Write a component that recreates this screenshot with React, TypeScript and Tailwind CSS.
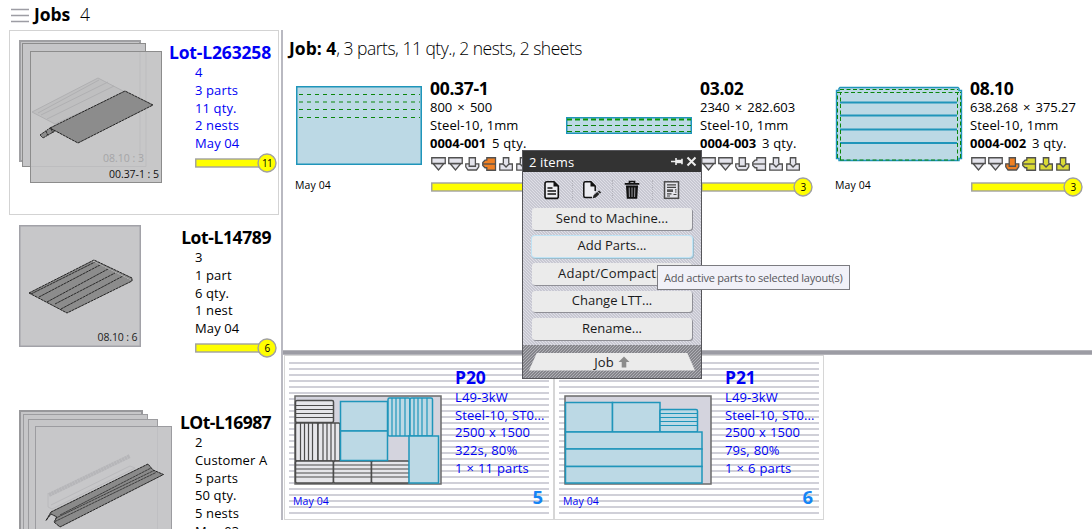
import type { ReactNode } from "react";

const FONT = "font-['Open_Sans','Noto_Sans',sans-serif]";

function Progress({ value, width }: { value: number; width: number }) {
  return (
    <svg width={width + 10} height="20" viewBox={`0 0 ${width + 10} 20`} className="block shrink-0">
      <rect x="0.75" y="6" width={width - 4} height="8" fill="#ffff00" stroke="#a0a0a0" strokeWidth="1.4" />
      <circle cx={width} cy="10" r="9" fill="#ffff00" stroke="#a0a0a0" strokeWidth="1.4" />
      <text x={width} y="13.8" textAnchor="middle" fontSize="10" fontWeight="500" fill="#000" letterSpacing="-0.6">
        {value}
      </text>
    </svg>
  );
}

type LotProps = {
  title: string;
  titleTracking: string;
  rows: string[];
  value?: number;
  selected?: boolean;
  children: ReactNode;
};

function Lot({ title, titleTracking, rows, value, selected, children }: LotProps) {
  return (
    <div
      className={`flex h-[185px] shrink-0 ${selected ? "text-[#0000f5] shadow-[inset_0_0_0_1px_#d3d3d3]" : "text-black"}`}
    >
      <svg width="166" height="185" viewBox="0 0 166 185" className="-mr-3 block shrink-0">
        {children}
      </svg>
      <div className="flex flex-1 flex-col pt-[10px]">
        <div className={`h-[24px] pr-2 text-right text-[17.5px] leading-[24px] font-bold whitespace-nowrap ${titleTracking}`}>
          {title}
        </div>
        <div className="pl-8 text-[13px] leading-[17.75px] tracking-[0.12px] whitespace-nowrap">
          {rows.map((r) => (
            <div key={r}>{r}</div>
          ))}
        </div>
        {value !== undefined && (
          <div className="pl-8">
            <Progress value={value} width={72} />
          </div>
        )}
      </div>
    </div>
  );
}

type Tool = "die" | "cup" | "left" | "vee";
const TOOL_PATHS: Record<Tool, string[]> = {
  die: ["M2 6.5 7.5 13 13 6.5z", "M.75.75h13.5V6.5H.75z"],
  cup: ["M4.2 6.8H.75V9.8L3 13h8.5l2.3-3.2V6.8h-3.4z", "M4.2.75h6.2v8.5H4.2z"],
  left: ["M4.8.75h8.7v12.5H4.8v-2.5H3L.75 8.5V5.5L3 3.2h1.8z", "M.75 7h12.7"],
  vee: ["M.75 13.2V7h3.6V.75h5.4V7h3.6v6.2z", "M3.6 6.5 7.05 10 10.5 6.5"],
};

function ToolIcon({ kind, fill }: { kind: Tool; fill: string }) {
  return (
    <svg width="17" height="14" viewBox="0 0 17 14" className="block shrink-0">
      {TOOL_PATHS[kind].map((d) => (
        <path key={d} d={d} fill={fill} stroke="#505050" strokeWidth="1.3" />
      ))}
    </svg>
  );
}

const PALE = "#e4e4ec";
const ORANGE = "#f08022";
const LIME = "#dada35";
const KINDS: Tool[] = ["die", "die", "cup", "left", "vee", "vee"];

type PartProps = {
  name: string;
  size: string;
  code: string;
  qty: number;
  fills: string[];
  children: ReactNode;
};

function Part({ name, size, code, qty, fills, children }: PartProps) {
  return (
    <div className="flex w-[270px] shrink-0">
      <div className="flex w-[134px] flex-col">
        <svg width="128" height="98" viewBox="0 0 128 98" className="block">
          {children}
        </svg>
        <div className="mt-[2px] text-[10.5px] leading-[14px] tracking-[0.1px]">May 04</div>
      </div>
      <div className="-mt-px flex flex-col pl-px whitespace-nowrap">
        <div className="h-[22px] text-[17.5px] leading-[23px] font-bold tracking-[-0.3px]">{name}</div>
        <div className="text-[13px] leading-[17.75px]">
          <div className="tracking-[-0.03px] [word-spacing:1.8px]">{size}</div>
          <div className="pt-[0.5px] tracking-[0.12px]">Steel-10, 1mm</div>
          <div className="-mt-[0.5px] flex">
            <span className="w-[62px] font-bold tracking-[0px]">{code}</span>
            <span className="tracking-[0.2px]">{qty} qty.</span>
          </div>
        </div>
        <div className="mt-[5px] flex pl-px">
          {KINDS.map((k, i) => (
            <ToolIcon key={i} kind={k} fill={fills[i]} />
          ))}
        </div>
        <div className="mt-[6px] pl-px">
          <Progress value={qty} width={102} />
        </div>
      </div>
    </div>
  );
}

type NestProps = { name: string; lines: string[]; index: number; children: ReactNode };

function Nest({ name, lines, index, children }: NestProps) {
  return (
    <div className="h-[165px] w-[270px] shrink-0 border border-[#d6d6d6] px-[4px] pt-[6px] text-[#0000f5]">
      <div className="flex h-[152px] bg-[repeating-linear-gradient(to_bottom,#d0d0d8_0px,#d0d0d8_2px,#ffffff_2px,#ffffff_6px)]">
        <div className="flex w-[166px] flex-col">
          <svg width="148" height="90" viewBox="0 0 148 90" className="mt-[33px] ml-[5px] block">
            {children}
          </svg>
          <div className="mt-[9px] ml-[4px] text-[10.5px] leading-[15px] tracking-[0.1px]">May 04</div>
        </div>
        <div className="flex flex-1 flex-col whitespace-nowrap">
          <div className="mt-[3px] h-[24px] text-[17.5px] leading-[24px] font-bold tracking-[-0.1px]">{name}</div>
          <div className="text-[13px] leading-[17.7px] tracking-[0.1px] [word-spacing:0.5px]">
            {lines.map((l) => (
              <div key={l}>{l}</div>
            ))}
          </div>
          <div className="mt-[7px] pr-[6px] text-right text-[18.5px] leading-[24px] font-bold text-[#1585f5]">{index}</div>
        </div>
      </div>
    </div>
  );
}

const TEAL = "#1f95ba";
const BLUE = "#bcd9e5";

type SlabProps = { x: number; y: number; w: number; h: number; v?: number[]; r?: number[]; gray?: boolean };

function Slab({ x, y, w, h, v = [], r = [], gray }: SlabProps) {
  const stroke = gray ? "#4c4c4c" : TEAL;
  return (
    <g stroke={stroke} fill="none">
      <rect x={x} y={y} width={w} height={h} fill={gray ? "#e6e6ea" : BLUE} strokeWidth="1.5" rx={v.length || r.length ? 1.5 : 0} />
      {v.map((p) => (
        <path key={p} d={`M${x + p} ${y}v${h}`} strokeWidth="1.2" />
      ))}
      {r.map((p) => (
        <path key={p} d={`M${x} ${y + p}h${w}`} strokeWidth="1.2" />
      ))}
    </g>
  );
}

function ActionButton({ label, tracking, hot }: { label: string; tracking: string; hot?: boolean }) {
  return (
    <button
      className={`flex h-[21.5px] w-[160px] items-center justify-center rounded-[3px] bg-[#ebebeb] pb-px text-[13px] leading-none text-[#1a1a1a] ${tracking} ${
        hot
          ? "shadow-[0_0_0_1px_#bfe3f5,1px_1px_0_1px_#9cbccb]"
          : "shadow-[1px_1px_0_0_#8f8f96]"
      }`}
    >
      {label}
    </button>
  );
}

function Divider() {
  return <div className="h-5 border-l border-dotted border-[#b4b4bc]" />;
}

function Popup() {
  return (
    <div className="absolute top-[150px] left-[522px] flex h-[229px] w-[180px] flex-col border border-[#55555a] bg-[repeating-linear-gradient(45deg,#c8c8d2_0px,#c8c8d2_1px,#dfdfe7_1px,#dfdfe7_2.12px)]">
      <div className="flex h-[21px] shrink-0 items-center bg-[#333333] pr-[4px] pl-[6px] text-[13px] text-white">
        <span className="flex-1 pt-px leading-5 tracking-[0.15px]">2 items</span>
        <svg width="12" height="9" viewBox="0 0 12 9" className="mr-[3px] block">
          <path d="M0 4.5h5" stroke="#ededed" strokeWidth="1.5" />
          <path d="M5 1v7M11 1.8v5.4" stroke="#ededed" strokeWidth="1.6" />
          <path d="M5 2.8h6v3.4H5z" fill="#ededed" />
        </svg>
        <svg width="11" height="11" viewBox="0 0 11 11" className="block">
          <path d="M1.5 1.5l8 8m0-8-8 8" stroke="#ededed" strokeWidth="2" />
        </svg>
      </div>
      <div className="flex h-[35px] shrink-0 items-center justify-center gap-[4.5px]">
        <svg width="30" height="20" viewBox="0 0 30 20" className="block">
          <path d="M10 1.8h7l4.3 4.3v10.3a2 2 0 0 1-2 2H10a2 2 0 0 1-2-2V3.8a2 2 0 0 1 2-2z" fill="#ececf0" stroke="#111" strokeWidth="1.6" />
          <path d="M16.5 1.8l4.8 4.7h-4.8z" fill="#111" />
          <path d="M10.500 8h5M10.500 11h8.500M10.500 14h8.500" fill="none" stroke="#111" strokeWidth="1.5" />
        </svg>
        <Divider />
        <svg width="30" height="20" viewBox="0 0 30 20" className="block">
          <path d="M15 17.5H8.3a1.5 1.5 0 0 1-1.5-1.5V3.3a1.5 1.5 0 0 1 1.5-1.500H14l4.2 4.2V11" fill="#ececf0" stroke="#111" strokeWidth="1.5" />
          <path d="M13.5 1.5l5 5h-5z" fill="#111" />
          <path d="M15.8 18.3l.8-3 3.6-3.3 2.2 2-3.6 3.5zM20.8 11.5l1.2-1.1 2.2 2-1.2 1.2z" fill="#222" />
        </svg>
        <Divider />
        <svg width="30" height="20" viewBox="0 0 30 20" className="block">
          <path d="M7.7 3.8h14.6M12.5 3V1.5h5V3" fill="none" stroke="#111" strokeWidth="1.7" />
          <path d="M9 5.5h12l-.8 13.3H9.800z" fill="#111" />
          <path d="M12.2 7.5l.2 9.5M15 7.5V17M17.8 7.5l-.2 9.500" stroke="#9a9aa0" strokeWidth="1" />
        </svg>
        <Divider />
        <svg width="30" height="20" viewBox="0 0 30 20" className="block">
          <rect x="7.5" y="1.8" width="14" height="16.5" fill="#e4e4ea" stroke="#4c4c4c" strokeWidth="1.5" />
          <path d="M10 4.800h9M10 7.300h9M10 13.800h4.500M10 16h3M18 9.800h1.500M18 12h1.500M16.500 14.500h3" stroke="#444" strokeWidth="1.2" />
          <path d="M10 9.300h6v2.700h-6z" fill="#555" />
        </svg>
      </div>
      <div className="flex flex-1 flex-col items-center gap-[6px] pt-px">
        <ActionButton label="Send to Machine..." tracking="tracking-[0.05px]" />
        <ActionButton label="Add Parts..." tracking="tracking-[0px]" hot />
        <ActionButton label="Adapt/Compact..." tracking="tracking-[0.25px] pl-px" />
        <ActionButton label="Change LTT..." tracking="tracking-[0px]" />
        <ActionButton label="Rename..." tracking="tracking-[0px]" />
      </div>
      <div className="flex h-[33px] shrink-0 items-center justify-center bg-[repeating-linear-gradient(135deg,#85858b_0px,#85858b_1px,#b0b0b6_1px,#b0b0b6_2.12px)]">
        <div className="flex h-[18px] w-[166px] items-center justify-center gap-1 bg-[#ebebeb] text-[13px] text-[#1a1a1a] [clip-path:polygon(8px_0,158px_0,100%_100%,0_100%)]">
          <span className="leading-[18px]">Job</span>
          <svg width="12" height="12" viewBox="0 0 12 12" className="block">
            <path d="M6 .5 11.5 6H8.3v5.5H3.7V6H.5z" fill="#8c8c8c" />
          </svg>
        </div>
      </div>
    </div>
  );
}

export default function App() {
  return (
    <div className={`relative flex h-[529px] w-[1092px] flex-col overflow-hidden bg-white text-black ${FONT}`}>
      <header className="flex h-[30px] shrink-0 items-center pl-[11px] text-[17.5px] leading-[28px]">
        <svg width="18" height="15" viewBox="0 0 18 15" className="block">
          <path d="M0 1.5h18M0 7.5h18M0 13.5h18" stroke="#9d9da4" strokeWidth="1.6" />
        </svg>
        <span className="ml-[5px] pb-[2px] font-bold tracking-[-0.1px]">Jobs</span>
        <span className="ml-[10px] pb-[2px] font-light">4</span>
      </header>
      <div className="flex min-h-0 flex-1">
        <aside className="flex w-[279px] shrink-0 flex-col overflow-hidden pl-[9px]">
          <Lot title="Lot-L263258" titleTracking="tracking-[-0.17px]" rows={["4", "3 parts", "11 qty.", "2 nests", "May 04"]} value={11} selected>
            <rect x="11" y="11" width="120" height="120" fill="#c6c6c8" stroke="#a0a0a3" strokeWidth="2" />
            <rect x="13.5" y="13.5" width="123" height="123" fill="#c6c6c8" stroke="#8c8c8c" />
            <rect x="21.5" y="21.5" width="131" height="131" fill="#c7c7c8" stroke="#8c8c8c" />
            <path d="M131 22v109M22 136.5h115V22" fill="none" stroke="#bdbdbf" />
            <path d="M23 82 89 48 116 62 46 94z" fill="#bfbfc0" stroke="#b0b0b2" />
            <path d="M29 83 90 50M38 89 105 56M32 85 99 52" fill="none" stroke="#b0b0b2" />
            <path d="M31 105l10-7 5 3-12 7zM37 101l2 5M42 99l2 4" fill="#8c8c8c" stroke="#222" strokeDasharray="2 .7" />
            <path d="M41 98 116 61 144 75 69 113z" fill="#8c8c8c" stroke="#222" strokeDasharray="3 .5" />
            <text x="94" y="132" fontSize="10.5" fill="#a5a5a7" textLength="41">08.10 : 3</text>
            <text x="100" y="148" fontSize="10.5" fill="#111" textLength="50">00.37-1 : 5</text>
          </Lot>
          <Lot title="Lot-L14789" titleTracking="tracking-[-0.4px]" rows={["3", "1 part", "6 qty.", "1 nest", "May 04"]} value={6}>
            <rect x="10.75" y="10.75" width="120.5" height="120.5" fill="#c7c7c9" stroke="#a2a2a8" strokeWidth="1.5" />
            <path d="M20 78 85 45 123 63V66L58 98z" fill="#8c8c8c" stroke="#222" strokeDasharray="3 .5" />
            <path d="M22 79 86 47 122 65M30 82 91 50M38 87 99 54M46 89 106 58M52 94 114 61" fill="none" stroke="#2b2b2b" strokeDasharray="3 .5" />
            <path d="M84 46 122 65" stroke="#ddd" strokeWidth=".8" />
            <text x="88.5" y="126" fontSize="10.5" fill="#222" textLength="40">08.10 : 6</text>
          </Lot>
          <Lot title="LOt-L16987" titleTracking="tracking-[-0.6px]" rows={["2", "Customer A", "5 parts", "50 qty.", "5 nests", "May 03"]}>
            <rect x="11" y="11" width="122" height="140" fill="#c6c6c8" stroke="#98989b" strokeWidth="2" />
            <rect x="14.5" y="14.5" width="124" height="140" fill="#c6c6c8" stroke="#9c9c9f" />
            <rect x="19.5" y="19.5" width="129" height="140" fill="#c6c6c8" stroke="#9c9c9f" />
            <rect x="26.5" y="26.5" width="136" height="150" fill="#c7c7c9" stroke="#9c9ca0" />
            <path d="M148.5 27v120" stroke="#bfbfc2" />
            <path d="M39 93V107l4 2 83-41-5-2-79 39" fill="none" stroke="#bababd" />
            <path d="M40 95 121 56" fill="none" stroke="#b6b6b9" strokeWidth="4" strokeDasharray="2.5 .4" />
            <path d="M42 112 139 64 144 70 154.5 74.5 51 127 45 122 48 117 42 114 37 120.5z" fill="#8a8a8a" stroke="#222" strokeDasharray="3 .4" />
            <path d="M51 115 142 68M46 118.5 145 70.5M46 121.5 147 72.5" fill="none" stroke="#2b2b2b" strokeWidth=".8" strokeDasharray="3 .4" />
          </Lot>
        </aside>
        <div className="ml-[2px] h-[490px] w-[2px] shrink-0 bg-[#b9b9c1]" />
        <main className="flex min-w-0 flex-1 flex-col">
          <section className="h-[320px] shrink-0">
            <h1 className="pt-[5px] pl-[6px] text-[17.5px] leading-[26px] whitespace-nowrap">
              <span className="font-bold tracking-[0px]">Job: 4</span>
              <span className="font-light tracking-[-0.5px]">, 3 parts, 11 qty., 2 nests, 2 sheets</span>
            </h1>
            <div className="flex pt-[17px] pl-[12px]">
              <Part name="00.37-1" size="800 × 500" code="0004-001" qty={5} fills={[PALE, PALE, PALE, ORANGE, PALE, PALE]}>
                <rect x="1.75" y="8.75" width="124.5" height="77.5" fill={BLUE} stroke={TEAL} strokeWidth="1.5" />
                <path d="M4 16.5h121M4 24h121M4 31.5h121M4 39.5h121" stroke="#0b860b" strokeDasharray="4 4" />
              </Part>
              <Part name="03.02" size="2340 × 282.603" code="0004-003" qty={3} fills={[PALE, PALE, PALE, PALE, PALE, PALE]}>
                <rect x="1.75" y="39.75" width="124.5" height="15.5" fill={BLUE} stroke={TEAL} strokeWidth="1.5" />
                <path d="M2 41.5h124" stroke="#0b960b" strokeWidth="2" strokeDasharray="5 3" />
                <path d="M2 47.5h124M2 53.5h124" stroke="#0b860b" strokeDasharray="5 3" />
              </Part>
              <Part name="08.10" size="638.268 × 375.27" code="0004-002" qty={3} fills={[PALE, PALE, ORANGE, LIME, LIME, LIME]}>
                <path d="M4 10.5l1-1h118l1 1v2h2.5v68H124v2H4v-2H1.5v-68H4z" fill={BLUE} stroke={TEAL} strokeWidth="1.4" />
                <path d="M5 24.5h117M5 37.5h117M5 51.5h117M5 65h117" stroke={TEAL} strokeWidth="1.8" />
                <path d="M3 14.5h122M5 11.5h118M5 82h118M2.5 80V14M5.500 82V14M122.500 82V14M125.500 80V14" stroke="#0b860b" strokeDasharray="4 2.5" fill="none" />
              </Part>
            </div>
          </section>
          <div className="h-[5px] shrink-0 border-t border-b border-[#b4b4ba] bg-[#9c9ca4]" />
          <section className="flex pl-[1px]">
            <Nest name="P20" lines={["L49-3kW", "Steel-10, ST0...", "2500 x 1500", "322s, 80%", "1 × 11 parts"]} index={5}>
              <rect x="1" y="1" width="146" height="88" fill="#d4d4de" stroke="#6a6a6a" strokeWidth="1.5" />
              <Slab gray x={1.5} y={5.5} w={38} h={22} r={[5, 9, 13, 17]} />
              <Slab gray x={1.5} y={28} w={22.5} h={38} v={[5, 9, 13, 17]} />
              <Slab gray x={24} y={28} w={22} h={38} v={[5, 9, 13, 17]} />
              <Slab gray x={1.5} y={66} w={38} h={22} r={[4, 8, 12, 16]} />
              <Slab gray x={39.5} y={66} w={38} h={22} r={[4, 8, 12, 16]} />
              <Slab gray x={77.5} y={66} w={38} h={22} r={[4, 8, 12, 16]} />
              <Slab x={46.5} y={6.5} w={47} h={29.5} />
              <Slab x={46.5} y={36} w={47} h={29.5} />
              <Slab x={94} y={3} w={22} h={38} v={[4, 8, 12, 17]} />
              <Slab x={116} y={3} w={22.5} h={38} v={[4, 8, 12, 17]} />
              <Slab x={115} y={41} w={29.5} h={47} />
            </Nest>
            <Nest name="P21" lines={["L49-3kW", "Steel-10, ST0...", "2500 x 1500", "79s, 80%", "1 × 6 parts"]} index={6}>
              <rect x="1" y="1" width="146" height="88" fill="#d4d4de" stroke="#6a6a6a" strokeWidth="1.5" />
              <Slab x={1.5} y={7.5} w={47} h={29.5} />
              <Slab x={48.5} y={7.5} w={47.5} h={29.5} />
              <Slab x={96} y={14.5} w={37.5} h={22.5} r={[4, 8, 12, 16]} />
              <Slab x={1.5} y={37} w={136.5} h={17} />
              <Slab x={1.5} y={54} w={136.5} h={17.5} />
              <Slab x={1.5} y={71.5} w={136.5} h={16.5} />
            </Nest>
          </section>
        </main>
      </div>
      <Popup />
      <div className="absolute top-[265px] left-[657px] flex h-[25px] w-[193px] items-center border border-[#7b7b80] bg-[#f1f1f8] pt-px pl-[6px] text-[11px] tracking-[-0.23px] whitespace-nowrap text-[#57575c]">
        Add active parts to selected layout(s)
      </div>
    </div>
  );
}
